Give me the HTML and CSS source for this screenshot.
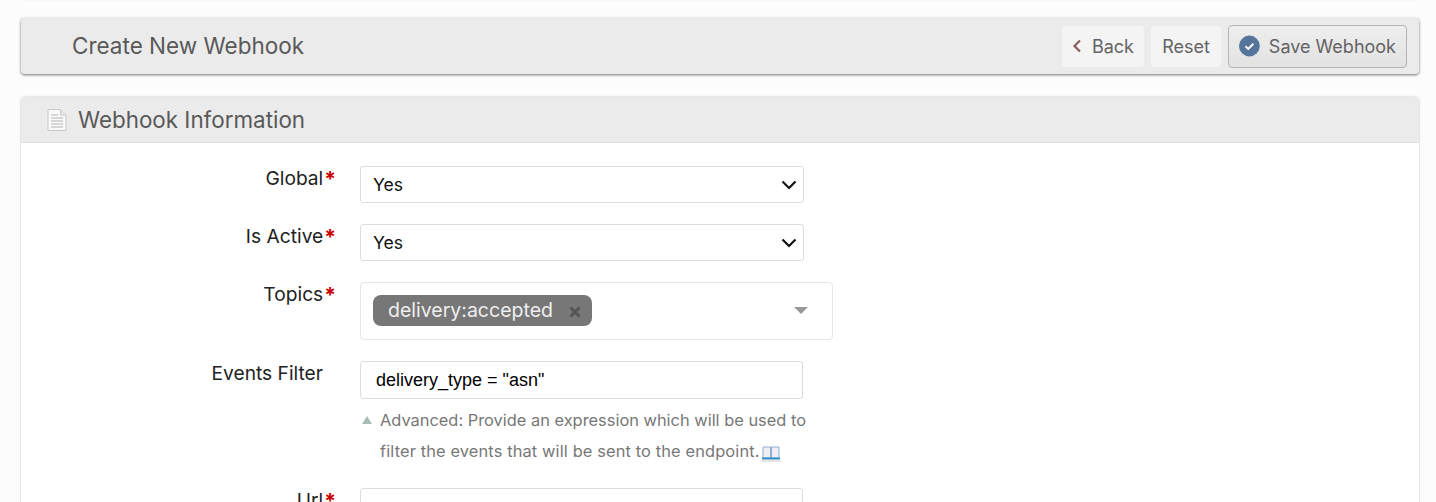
FILE: index.html

```html
<!DOCTYPE html>
<html lang="en">
<head>
    <meta charset="UTF-8">
    <meta name="viewport" content="width=device-width, initial-scale=1.0">
    <title>Create New Webhook</title>
    <link rel="stylesheet" href="styles.css">
</head>
<body>
    <div class="top-strip"></div>

    <header class="page-bar">
        <h1 class="page-title">Create New Webhook</h1>
        <div class="actions">
            <button class="btn btn-back" type="button">
                <svg class="back-icon" width="10" height="14" viewBox="0 0 10 14"><path d="M8 1.5 L2.5 7 L8 12.5" fill="none" stroke="#8a5a5e" stroke-width="2.2"/></svg>
                Back
            </button>
            <button class="btn btn-reset" type="button">Reset</button>
            <button class="btn btn-save" type="button">
                <svg width="22" height="22" viewBox="0 0 22 22"><circle cx="11" cy="11" r="11" fill="#55759a"/><path d="M6.8 11.2 L9.8 14 L15.2 8.6" fill="none" stroke="#fff" stroke-width="2"/></svg>
                Save Webhook
            </button>
        </div>
    </header>

    <section class="card">
        <div class="card-head">
            <svg width="20" height="24" viewBox="0 0 20 24">
                <path d="M1 1.5 H13.5 L19 7 V22.5 H1 Z" fill="#f9f9f9" stroke="#c8c8c8"/>
                <path d="M13.5 1.5 V7 H19" fill="#e6e6e6" stroke="#c8c8c8"/>
                <path d="M4 7 H11 M4 10 H16 M4 13 H16 M4 16 H16 M4 19 H16" stroke="#b4b4b4" stroke-width="1.2"/>
            </svg>
            <h2 class="card-title">Webhook Information</h2>
        </div>

        <form class="form">
            <div class="row row-select">
                <label class="label">Global<span class="req">*</span></label>
                <select class="field"><option>Yes</option><option>No</option></select>
            </div>
            <div class="row row-select">
                <label class="label">Is Active<span class="req">*</span></label>
                <select class="field"><option>Yes</option><option>No</option></select>
            </div>
            <div class="row row-topics">
                <label class="label">Topics<span class="req">*</span></label>
                <div class="multi">
                    <span class="tag">delivery:accepted<svg class="tag-x" width="12" height="12" viewBox="0 0 12 12"><path d="M1.5 1.5 L10.5 10.5 M10.5 1.5 L1.5 10.5" stroke="#555" stroke-width="3"/></svg></span>
                    <span class="caret"></span>
                </div>
            </div>
            <div class="row row-filter">
                <label class="label">Events Filter</label>
                <div>
                    <input class="field field-text" type="text" value='delivery_type = "asn"'>
                    <p class="help"><span class="help-arrow"></span>Advanced: Provide an expression which will be used to <span class="help-wide">filter the events that will be sent to the endpoint.</span><svg class="book" width="20" height="17" viewBox="0 0 20 17"><path d="M2 2 H9.5 V13 H2 Z M10.5 2 H18 V13 H10.5 Z" fill="#f0eef6" stroke="#8fb0cc"/><path d="M1 13.5 H19" stroke="#2f8cc6" stroke-width="2"/><path d="M0 16 H20" stroke="#dcdcdc" stroke-width="1.5"/></svg></p>
                </div>
            </div>
            <div class="row">
                <label class="label">Url<span class="req">*</span></label>
                <input class="field field-text" type="text">
            </div>
        </form>
    </section>
</body>
</html>
```

FILE: styles.css

```css
* {
    box-sizing: border-box;
}

html, body {
    height: 502px;
    overflow: hidden;
}

body {
    margin: 0;
    padding: 0 17px 0 21px;
    background: #fcfcfc;
    font-family: Inter, "Noto Sans", sans-serif;
    color: #111;
}

.top-strip {
    height: 1px;
    margin-bottom: 17px;
    background: #f7f7f7;
}

.page-bar {
    display: flex;
    justify-content: space-between;
    align-items: center;
    height: 56px;
    padding: 0 12px 0 51px;
    background: #ebebeb;
    border-radius: 4px;
    box-shadow: 0 1px 3px rgba(0, 0, 0, 0.55);
}

.page-title {
    margin: 0 0 2px;
    font-size: 22.5px;
    font-weight: 400;
    color: #595959;
}

.actions {
    display: flex;
    align-items: center;
    gap: 7px;
}

.btn {
    display: flex;
    align-items: center;
    height: 41px;
    padding: 0 10px;
    border: 0;
    border-radius: 4px;
    background: #f4f4f4;
    font-family: inherit;
    font-size: 18px;
    color: #636363;
    white-space: nowrap;
}

.btn-back {
    width: 82px;
}

.btn-reset {
    justify-content: center;
    width: 70px;
}

.back-icon {
    margin-right: 10px;
}

.btn-save {
    gap: 9px;
    width: 179px;
    height: 43px;
    border: 1px solid #b5b5b5;
    background: linear-gradient(#eeeeee, #e2e2e2);
}

.card {
    height: 500px;
    margin-top: 23px;
    background: #fff;
    border-radius: 4px 4px 0 0;
    box-shadow: 0 0 2px rgba(0, 0, 0, 0.3);
}

.card-head {
    display: flex;
    align-items: center;
    gap: 11px;
    height: 46px;
    padding: 0 0 0 26px;
    background: #ebebeb;
    border-bottom: 1px solid #dedede;
    border-radius: 4px 4px 0 0;
}

.card-title {
    margin: 0;
    font-size: 22.4px;
    font-weight: 400;
    color: #595959;
}

.form {
    padding-top: 23px;
}

.row {
    display: grid;
    grid-template-columns: 315px 1fr;
    column-gap: 24px;
    align-items: start;
}

.row-select {
    margin-bottom: 21px;
}

.row-topics {
    margin-bottom: 21px;
}

.row-filter {
    margin-bottom: 21px;
}

.label {
    text-align: right;
    font-size: 19.2px;
    line-height: 24px;
    color: #222;
}

.row-filter .label {
    padding-right: 13px;
}

.req {
    margin-left: 1px;
    font-size: 21px;
    line-height: 20px;
    font-weight: 700;
    vertical-align: -2px;
    color: #c00;
}

select.field {
    appearance: none;
    background: #fff url("data:image/svg+xml,%3Csvg xmlns='http://www.w3.org/2000/svg' width='16' height='10'%3E%3Cpath d='M1.5 1.5 L8 8 L14.5 1.5' fill='none' stroke='%23111' stroke-width='2.2'/%3E%3C/svg%3E") no-repeat right 6px center;
    padding-left: 12px;
}

.field {
    display: block;
    width: 444px;
    height: 37px;
    padding: 0 8px;
    border: 1px solid #dcdcdc;
    border-radius: 3px;
    background: #fff;
    font-family: inherit;
    font-size: 17.6px;
    color: #111;
}

.field-text {
    width: 443px;
    height: 38px;
    padding: 0 15px;
    font-family: "Liberation Sans", Arial, sans-serif;
    font-size: 18px;
    color: #000;
}

.multi {
    position: relative;
    display: flex;
    align-items: center;
    width: 473px;
    height: 58px;
    padding: 0 0 2px 12px;
    border: 1px solid #e6e6e6;
    border-radius: 4px;
}

.tag {
    display: flex;
    align-items: center;
    height: 31px;
    padding: 0 11px 0 15px;
    border-radius: 8px;
    background: #777;
    font-size: 19.5px;
    color: #eee;
}

.tag-x {
    margin: 4px 0 0 16px;
}

.caret {
    position: absolute;
    right: 24px;
    top: 24px;
    border-style: solid;
    border-width: 7px 7px 0;
    border-color: #999 transparent transparent;
}

.help {
    position: relative;
    width: 450px;
    margin: 6px 0 0;
    padding-left: 20px;
    font-size: 16.4px;
    line-height: 31px;
    color: #777;
}

.help-wide {
    letter-spacing: 0.13px;
}

.help-arrow {
    position: absolute;
    left: 2px;
    top: 11px;
    border-style: solid;
    border-width: 0 5.5px 8px;
    border-color: transparent transparent #a9bdb8;
}

.book {
    margin-left: 1px;
    vertical-align: -5px;
}
```
